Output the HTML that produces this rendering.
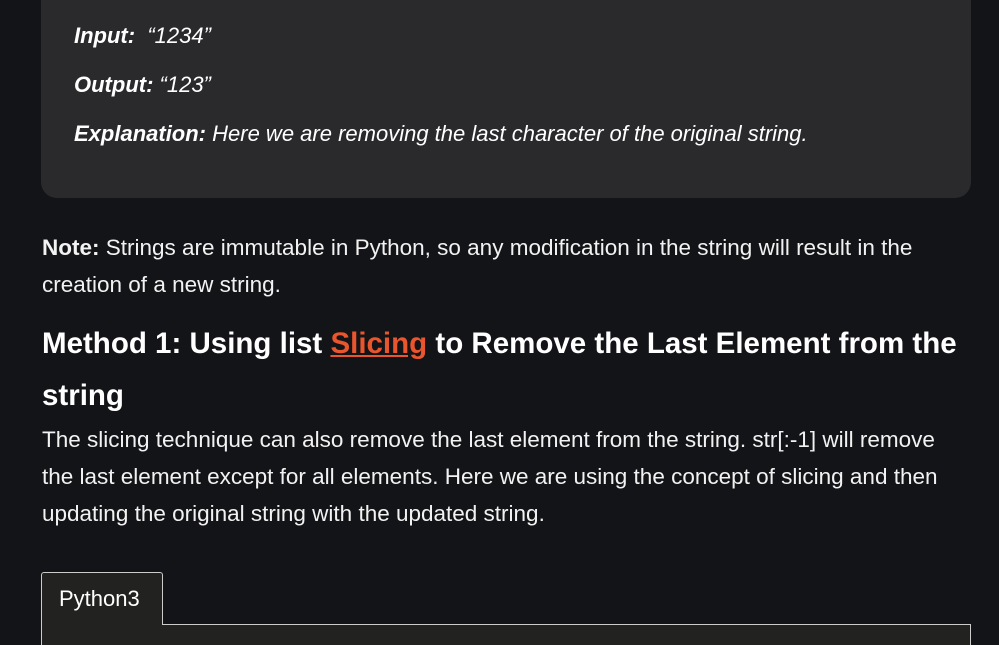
<!DOCTYPE html>
<html><head><style>
body{margin:0;width:999px;height:636px;background:#131417;overflow:hidden;font-family:"Liberation Sans",sans-serif;color:#fff;position:relative}
.box{position:absolute;left:41px;top:-20px;width:930px;height:218px;background:#2a2a2d;border-radius:0 0 16px 16px}
.ex{position:absolute;left:74px;font-style:italic;font-size:22px;white-space:nowrap}
.ex b{font-weight:bold}
.p{position:absolute;left:42px;font-size:22.5px;line-height:37px;white-space:nowrap;color:#f2f2f2}
h2{position:absolute;left:42px;top:318px;margin:0;font-size:29.5px;line-height:52px;font-weight:bold;width:930px}
h2 a{color:#e9552d;text-decoration:underline}
.tab{position:absolute;left:41px;top:572px;width:122px;height:53px;background:#222220;border:1px solid #ccc;border-bottom:none;border-radius:3px 3px 0 0;box-sizing:border-box;font-size:22px;padding:13px 0 0 17px;z-index:2}
.line{position:absolute;left:162px;top:624px;width:809px;height:1px;background:#ccc}
.panel{position:absolute;left:41px;top:625px;width:930px;height:20px;background:#222220;border-left:1px solid #ccc;border-right:1px solid #ccc;box-sizing:border-box}
</style></head><body>
<div class="box"></div>
<div class="ex" style="top:23px"><b>Input:</b>&nbsp; “1234”</div>
<div class="ex" style="top:72px"><b>Output:</b> “123”</div>
<div class="ex" style="top:121px"><b>Explanation:</b> Here we are removing the last character of the original string.</div>
<div class="p" style="top:229px"><b>Note:</b> Strings are immutable in Python, so any modification in the string will result in the<br>creation of a new string.</div>
<h2>Method 1: Using list <a>Slicing</a> to Remove the Last Element from the string</h2>
<div class="p" style="top:421px">The slicing technique can also remove the last element from the string. str[:-1] will remove<br>the last element except for all elements. Here we are using the concept of slicing and then<br>updating the original string with the updated string.</div>
<div class="tab">Python3</div>
<div class="line"></div>
<div class="panel"></div>
</body></html>
